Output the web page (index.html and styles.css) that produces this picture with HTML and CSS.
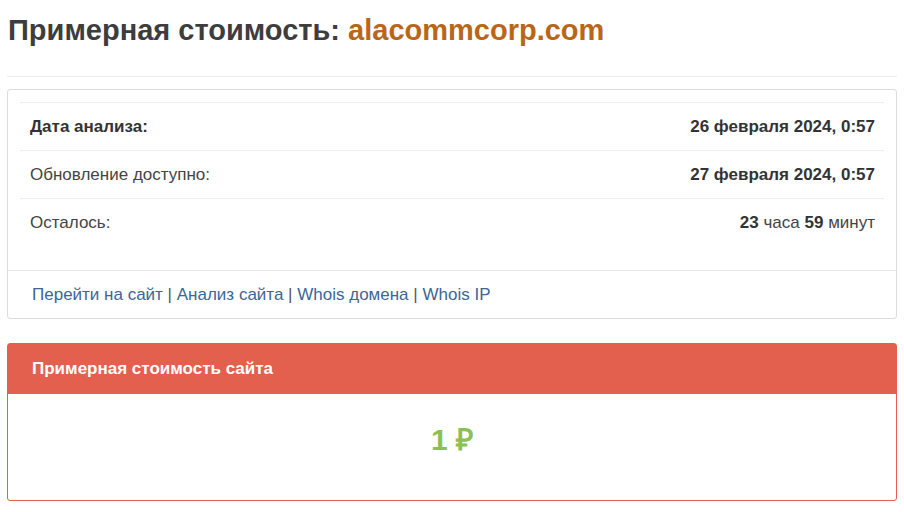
FILE: index.html
```html
<!DOCTYPE html>
<html lang="ru">
<head>
<meta charset="utf-8">
<title>Примерная стоимость: alacommcorp.com</title>
<link rel="stylesheet" href="styles.css">
</head>
<body>
<div class="page">
  <h1 class="title">Примерная стоимость: <span class="domain">alacommcorp.com</span></h1>
  <hr class="divider">
  <div class="panel info">
    <div class="panel-body">
      <table class="info-table">
        <tr>
          <td class="label strong">Дата анализа:</td>
          <td class="value"><b>26 февраля 2024, 0:57</b></td>
        </tr>
        <tr>
          <td class="label">Обновление доступно:</td>
          <td class="value"><b>27 февраля 2024, 0:57</b></td>
        </tr>
        <tr>
          <td class="label">Осталось:</td>
          <td class="value"><b>23</b> часа <b>59</b> минут</td>
        </tr>
      </table>
    </div>
    <div class="panel-footer">
      <a href="#">Перейти на сайт</a> | <a href="#">Анализ сайта</a> | <a href="#">Whois домена</a> | <a href="#">Whois IP</a>
    </div>
  </div>
  <div class="panel cost">
    <div class="cost-head">Примерная стоимость сайта</div>
    <div class="cost-body">1 ₽</div>
  </div>
</div>
</body>
</html>
```

FILE: styles.css
```css
html, body {
  margin: 0;
  padding: 0;
  background: #fff;
}
body {
  font-family: "Liberation Sans", Arial, sans-serif;
  color: #333;
  font-size: 17px;
}
.page {
  padding: 0 7px;
}
.title {
  margin: 0;
  padding-top: 12px;
  font-size: 29px;
  line-height: 36px;
  font-weight: bold;
  color: #3d3d3d;
  padding-left: 1px;
}
.domain {
  color: #b8661a;
}
.divider {
  border: 0;
  border-top: 1px solid #eee;
  margin: 28px 0 12px 0;
  height: 0;
}
.panel {
  border: 1px solid #ddd;
  border-radius: 3px;
  background: #fff;
}
.panel-body {
  padding: 12px;
}
.info-table {
  width: 100%;
  border-collapse: collapse;
  margin-bottom: 12px;
}
.info-table td {
  border-top: 1px solid #eee;
  padding: 13px 9px 13px 10px;
  line-height: 21px;
  font-size: 17px;
}
.label {
  color: #444;
}
.label.strong {
  font-weight: bold;
  color: #333;
}
.value {
  text-align: right;
  color: #444;
}
.value b {
  color: #333;
}
.panel-footer {
  border-top: 1px solid #e8e8e8;
  padding: 13px 24px 13px 24px;
  line-height: 21px;
  color: #555;
}
.panel-footer a {
  color: #3a6698;
  text-decoration: none;
}
.cost {
  margin-top: 24px;
  border-color: #e3604f;
}
.cost-head {
  background: #e3604f;
  color: #fff;
  font-weight: bold;
  padding: 0 24px;
  height: 50px;
  line-height: 50px;
  font-size: 17px;
}
.cost-body {
  height: 106px;
  line-height: 92px;
  text-align: center;
  font-size: 30px;
  font-weight: bold;
  color: #8cc152;
}
```
